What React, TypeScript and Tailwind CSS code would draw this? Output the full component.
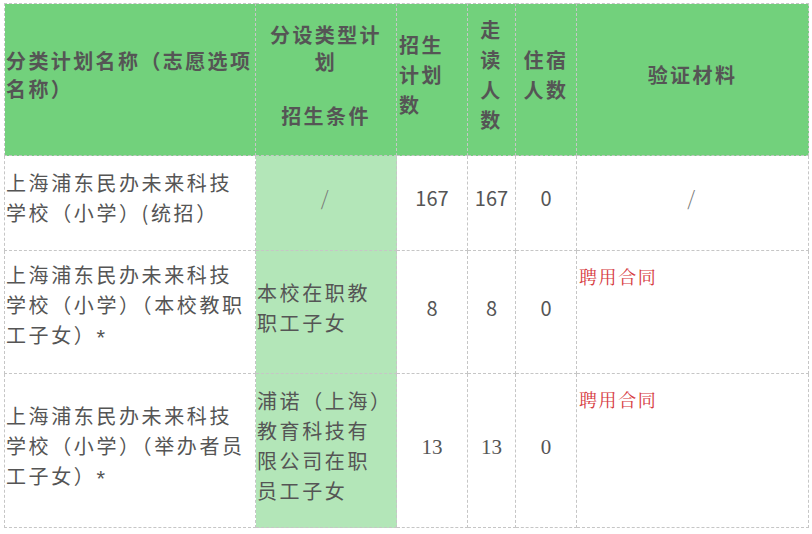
import React from "react";

const sans = { fontFamily: '"Noto Sans CJK SC", "Noto Sans", sans-serif' };

export default function App() {
  const cell = "border border-dashed border-[#c6c6c6] p-0";
  const green2 = "bg-[#b3e6b8]";
  const star = (
    <span
      className="inline-block align-top h-[30px] leading-[36px] text-[22px] tracking-normal"
      style={{ fontFamily: '"Liberation Sans", sans-serif' }}
    >
      *
    </span>
  );
  return (
    <div className="w-[812px] h-[534px] bg-white pt-[3px] pl-[4px]" style={sans}>
      <table className="border-collapse table-fixed w-[804px] text-[#555]">
        <colgroup>
          <col className="w-[251px]" />
          <col className="w-[141px]" />
          <col className="w-[71px]" />
          <col className="w-[48px]" />
          <col className="w-[61px]" />
          <col className="w-[232px]" />
        </colgroup>
        <thead>
          <tr className="h-[152px] bg-[#72d17c] font-bold text-[20px] leading-[28px] tracking-[2.4px]">
            <th className={`${cell} text-left align-middle pl-[1px] pb-[10px] whitespace-nowrap font-bold`}>
              分类计划名称（志愿选项
              <br />
              名称）
            </th>
            <th className={`${cell} text-center align-middle pb-[10px] leading-[27px] whitespace-nowrap font-bold`}>
              分设类型计
              <br />
              划
              <br />
              &nbsp;
              <br />
              招生条件
            </th>
            <th className={`${cell} text-left align-middle pl-[2px] pb-[10px] leading-[30px] font-bold`}>
              招生
              <br />
              计划
              <br />
              数
            </th>
            <th className={`${cell} text-center align-middle pb-[10px] leading-[30px] font-bold`}>
              走
              <br />
              读
              <br />
              人
              <br />
              数
            </th>
            <th className={`${cell} text-center align-middle pb-[10px] leading-[30px] font-bold`}>
              住宿
              <br />
              人数
            </th>
            <th className={`${cell} text-center align-middle pb-[10px] font-bold`}>验证材料</th>
          </tr>
        </thead>
        <tbody className="text-[20px] leading-[30px] tracking-[2.6px]">
          <tr className="h-[95px]">
            <td className={`${cell} align-middle pl-[1px] pb-[10px] whitespace-nowrap`}>
              上海浦东民办未来科技
              <br />
              学校（小学）(统招）
            </td>
            <td className={`${cell} ${green2} align-middle text-center pb-[10px] text-[#777] font-light`}>/</td>
            <td className={`${cell} align-middle text-center pb-[10px] tracking-normal`}>167</td>
            <td className={`${cell} align-middle text-center pb-[10px] tracking-normal`}>167</td>
            <td className={`${cell} align-middle text-center pb-[10px] tracking-normal`}>0</td>
            <td className={`${cell} align-middle text-center pb-[10px] text-[#777] font-light`}>/</td>
          </tr>
          <tr className="h-[123px]">
            <td className={`${cell} align-middle pl-[1px] pb-[14px] whitespace-nowrap`}>
              上海浦东民办未来科技
              <br />
              学校（小学）（本校教职
              <br />
              工子女）{star}
            </td>
            <td className={`${cell} ${green2} align-middle pl-[1px] pb-[8px] whitespace-nowrap`}>
              本校在职教
              <br />
              职工子女
            </td>
            <td className={`${cell} align-middle text-center pb-[8px] tracking-normal`}>8</td>
            <td className={`${cell} align-middle text-center pb-[8px] tracking-normal`}>8</td>
            <td className={`${cell} align-middle text-center pb-[8px] tracking-normal`}>0</td>
            <td className={`${cell} align-top pl-[2px] pt-[10px]`}>
              <span
                className="text-[18px] leading-[20px] tracking-[1.6px] text-[#d63a40]"
                style={{ fontFamily: '"Noto Serif CJK SC", "Noto Sans CJK SC", serif' }}
              >
                聘用合同
              </span>
            </td>
          </tr>
          <tr className="h-[154px]">
            <td className={`${cell} align-middle pl-[1px] pb-[10px] whitespace-nowrap`}>
              上海浦东民办未来科技
              <br />
              学校（小学）（举办者员
              <br />
              工子女）{star}
            </td>
            <td className={`${cell} ${green2} align-middle pl-[1px] pb-[10px] whitespace-nowrap`}>
              浦诺（上海）
              <br />
              教育科技有
              <br />
              限公司在职
              <br />
              员工子女
            </td>
            <td
              className={`${cell} align-middle text-center pb-[8px] tracking-normal text-[21px]`}
              style={{ fontFamily: '"Liberation Serif", serif' }}
            >
              13
            </td>
            <td
              className={`${cell} align-middle text-center pb-[8px] tracking-normal text-[21px]`}
              style={{ fontFamily: '"Liberation Serif", serif' }}
            >
              13
            </td>
            <td
              className={`${cell} align-middle text-center pb-[8px] tracking-normal text-[21px]`}
              style={{ fontFamily: '"Liberation Serif", serif' }}
            >
              0
            </td>
            <td className={`${cell} align-top pl-[2px] pt-[10px]`}>
              <span
                className="text-[18px] leading-[20px] tracking-[1.6px] text-[#d63a40]"
                style={{ fontFamily: '"Noto Serif CJK SC", "Noto Sans CJK SC", serif' }}
              >
                聘用合同
              </span>
            </td>
          </tr>
        </tbody>
      </table>
    </div>
  );
}
